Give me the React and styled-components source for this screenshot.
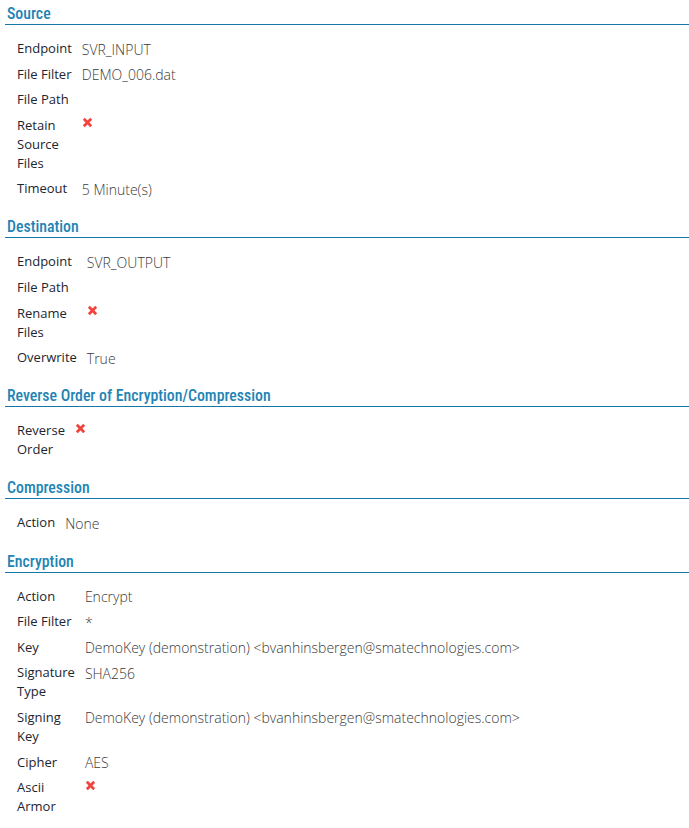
import React from "react";
import styled, { createGlobalStyle } from "styled-components";

const GlobalStyle = createGlobalStyle`
  body {
    margin: 0;
    background: #fff;
    font-family: "Open Sans", "Liberation Sans", sans-serif;
  }
`;

const sections = [
  {
    title: "Source",
    rows: [
      ["Endpoint", "SVR_INPUT"],
      ["File Filter", "DEMO_006.dat"],
      ["File Path", ""],
      ["Retain Source Files", false],
      ["Timeout", "5 Minute(s)"],
    ],
  },
  {
    title: "Destination",
    rows: [
      ["Endpoint", "SVR_OUTPUT"],
      ["File Path", ""],
      ["Rename Files", false],
      ["Overwrite", "True"],
    ],
  },
  {
    title: "Reverse Order of Encryption/Compression",
    rows: [["Reverse Order", false]],
  },
  {
    title: "Compression",
    rows: [["Action", "None"]],
  },
  {
    title: "Encryption",
    rows: [
      ["Action", "Encrypt"],
      ["File Filter", "*"],
      ["Key", "DemoKey (demonstration) <bvanhinsbergen@smatechnologies.com>"],
      ["Signature Type", "SHA256"],
      ["Signing Key", "DemoKey (demonstration) <bvanhinsbergen@smatechnologies.com>"],
      ["Cipher", "AES"],
      ["Ascii Armor", false],
    ],
  },
];

function Cross() {
  return (
    <CrossIcon viewBox="0 0 12 12" width="11" height="11">
      <path
        d="M2 2 L10 10 M10 2 L2 10"
        stroke="#f2443c"
        strokeWidth="3"
        strokeLinecap="butt"
      />
    </CrossIcon>
  );
}

function App() {
  return (
    <Page>
      <GlobalStyle />
      {sections.map((section, idx) => (
        <Section key={idx} first={idx === 0}>
          <Heading>{section.title}</Heading>
          <Props>
            {section.rows.map(([label, value], i) => (
              <React.Fragment key={i}>
                <Label>{label}</Label>
                <Value>{value === false ? <Cross /> : value}</Value>
              </React.Fragment>
            ))}
          </Props>
        </Section>
      ))}
    </Page>
  );
}

const Page = styled.div`
  padding: 0 0 0 5px;
  width: 684px;
`;

const Section = styled.section`
  margin-top: ${(props) => (props.first ? "0" : "11.5px")};
`;

const Heading = styled.h3`
  margin: 0;
  padding: 4px 0 0 2px;
  font-family: "Roboto Condensed", "DejaVu Sans Condensed", "Liberation Sans Narrow", Roboto, sans-serif;
  font-stretch: condensed;
  font-weight: 500;
  font-size: 15.8px;
  line-height: 20px;
  color: #2384b4;
  border-bottom: 1px solid #1477a6;
`;

const Props = styled.div`
  display: grid;
  grid-template-columns: min-content 1fr;
  column-gap: 10px;
  margin-top: 11px;
  padding-left: 12px;
`;

const Label = styled.div`
  padding: 3px 0 3.6px;
  font-size: 13px;
  line-height: 19px;
  color: #1c2530;
`;

const Value = styled.div`
  padding: 3.5px 0 3.1px;
  font-size: 14px;
  font-weight: 300;
  line-height: 19px;
  color: #3a3a3a;
`;

const CrossIcon = styled.svg`
  display: block;
  margin-top: 1px;
`;

export default App;
